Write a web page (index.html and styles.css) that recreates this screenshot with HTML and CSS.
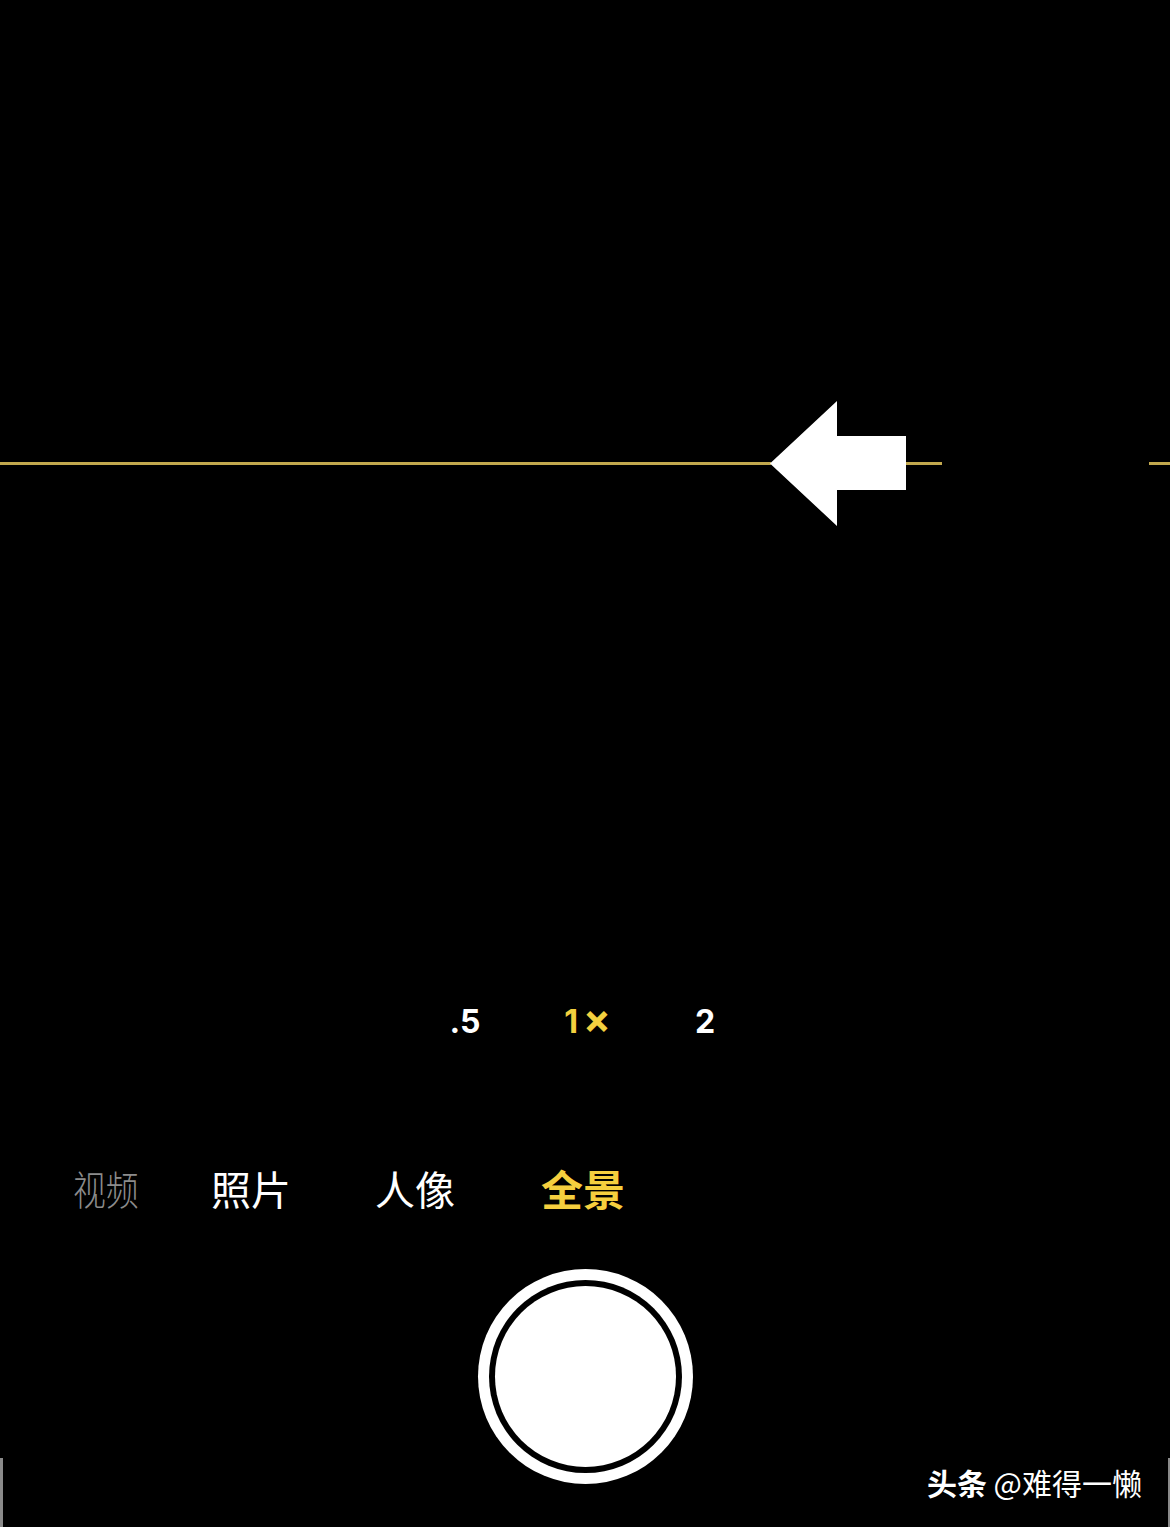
FILE: index.html
```html
<!DOCTYPE html>
<html lang="zh">
<head>
<meta charset="utf-8">
<title>全景</title>
<link rel="stylesheet" href="styles.css">
</head>
<body>
<div class="screen">
  <div class="pano">
    <div class="seg seg-a"></div>
    <svg class="arrow" width="136" height="125" viewBox="0 0 136 125">
      <polygon points="0,62.5 67,0 67,35 136,35 136,89 67,89 67,125" fill="#ffffff"/>
    </svg>
    <div class="seg seg-b"></div>
    <div class="gapseg"></div>
    <div class="seg seg-c"></div>
  </div>

  <div class="zoom">
    <span class="zbtn">.5</span>
    <span class="zbtn active">1<span class="times">×</span></span>
    <span class="zbtn">2</span>
  </div>

  <div class="modes">
    <span class="mode dim first">视频</span>
    <span class="mode">照片</span>
    <span class="mode">人像</span>
    <span class="mode active">全景</span>
  </div>

  <div class="shutter-row">
    <div class="shutter">
      <div class="shutter-gap">
        <div class="shutter-core"></div>
      </div>
    </div>
  </div>

  <div class="watermark"><b>头条</b> @难得一懒</div>
  <div class="edge edge-left"></div>
  <div class="edge edge-right"></div>
</div>
</body>
</html>
```

FILE: styles.css
```css
html, body {
  margin: 0;
  padding: 0;
  background: #000;
}
.screen {
  position: relative;
  width: 1170px;
  height: 1527px;
  overflow: hidden;
  background: #000;
  padding-top: 401px;
  box-sizing: border-box;
}
.pano {
  display: flex;
  align-items: center;
  height: 125px;
}
.seg {
  height: 3px;
  background: #c2a84e;
}
.seg-a { width: 771px; margin-right: -1px; }
.arrow { display: block; flex: none; position: relative; z-index: 1; }
.seg-b { width: 36px; }
.gapseg { width: 207px; }
.seg-c { flex: 1; }

.zoom {
  margin-top: 476px;
  display: flex;
  justify-content: center;
  height: 40px;
  line-height: 40px;
  font-family: Inter, Roboto, "Liberation Sans", sans-serif;
  font-weight: 700;
  font-size: 32px;
  color: #fff;
}
.zbtn {
  width: 120px;
  text-align: center;
}
.zbtn.active { color: #f3d03f; padding-left: 5px; box-sizing: border-box; }
.times {
  font-size: 41px;
  line-height: 0;
  margin-left: 5px;
  vertical-align: -1px;
}

.modes {
  margin-top: 125px;
  display: flex;
  gap: 84px;
  padding-left: 73px;
  height: 42px;
  line-height: 42px;
  font-family: "Noto Sans CJK SC", "Noto Sans", sans-serif;
  font-size: 40px;
  color: #fff;
}
.mode { white-space: nowrap; display: block; }
.mode.first {
  margin-right: -26px;
  transform: scaleX(0.82);
  transform-origin: left center;
  font-weight: 300;
}
.mode.dim { color: #8c8c8c; }
.mode.active { color: #f5cf3e; font-weight: 700; font-size: 42px; margin-left: 2px; }

.shutter-row {
  margin-top: 60px;
  display: flex;
  justify-content: center;
}
.shutter {
  width: 215px;
  height: 215px;
  border-radius: 50%;
  background: #fff;
  padding: 11px;
  box-sizing: border-box;
}
.shutter-gap {
  width: 100%;
  height: 100%;
  border-radius: 50%;
  background: #000;
  padding: 6px;
  box-sizing: border-box;
}
.shutter-core {
  width: 100%;
  height: 100%;
  border-radius: 50%;
  background: #fff;
}

.watermark {
  position: absolute;
  right: 28px;
  top: 1462px;
  font-family: "Noto Sans CJK SC", "Noto Sans", sans-serif;
  font-size: 30px;
  line-height: 40px;
  color: #fff;
  white-space: nowrap;
}
.watermark b { font-weight: 700; }
.edge {
  position: absolute;
  top: 1458px;
  bottom: 0;
  width: 3px;
  background: #8a8a8a;
}
.edge-left { left: 0; }
.edge-right { right: 0; width: 2px; }
```
